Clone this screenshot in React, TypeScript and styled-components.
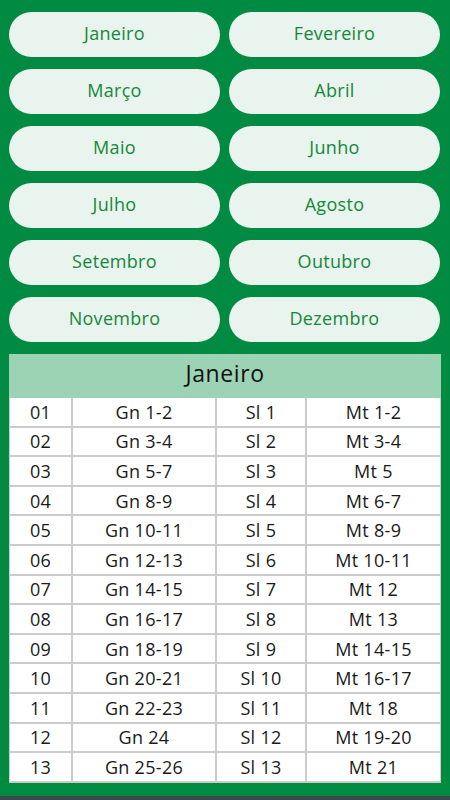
import React from 'react';
import styled, { createGlobalStyle } from 'styled-components';

const GlobalStyle = createGlobalStyle`
    html, body {
        margin: 0;
        padding: 0;
        background: #3a4950;
        font-family: "Open Sans", "Noto Sans", sans-serif;
    }
`

const Page = styled.div`
    width: 450px;
    box-sizing: border-box;
    background: #008a42;
    padding: 12px 9px 13px 9px;
`

const MonthGrid = styled.div`
    display: grid;
    grid-template-columns: 211px 211px;
    column-gap: 9px;
    row-gap: 12px;
`

const MonthBtn = styled.button`
    height: 45px;
    border: none;
    border-radius: 23px;
    background: #e8f4ed;
    color: #16883a;
    font-family: "Open Sans", "Noto Sans", sans-serif;
    font-size: 18px;
    letter-spacing: 0.3px;
    cursor: pointer;
    padding: 0 0 3px 0;
`

const Table = styled.div`
    margin-top: 12px;
    width: 432px;
`

const TableTitle = styled.div`
    height: 44px;
    padding-bottom: 6px;
    box-sizing: border-box;
    background: #9dd3b5;
    display: flex;
    align-items: center;
    justify-content: center;
    font-size: 23px;
    color: #111;
    letter-spacing: 0.6px;
`

const Rows = styled.div`
    display: grid;
    grid-template-columns: 61px 142px 88px 133px;
    grid-auto-rows: 27.6px;
    column-gap: 2px;
    row-gap: 2px;
    padding: 0 1px 2px 1px;
    background: #cccccc;
`

const Cell = styled.div`
    background: #fff;
    display: flex;
    align-items: center;
    justify-content: center;
    font-size: 18px;
    color: #1a1a1a;
    letter-spacing: 0.3px;
`

const months = [
    'Janeiro', 'Fevereiro', 'Março', 'Abril', 'Maio', 'Junho',
    'Julho', 'Agosto', 'Setembro', 'Outubro', 'Novembro', 'Dezembro',
]

const readings: [string, string, string, string][] = [
    ['01', 'Gn 1-2', 'Sl 1', 'Mt 1-2'],
    ['02', 'Gn 3-4', 'Sl 2', 'Mt 3-4'],
    ['03', 'Gn 5-7', 'Sl 3', 'Mt 5'],
    ['04', 'Gn 8-9', 'Sl 4', 'Mt 6-7'],
    ['05', 'Gn 10-11', 'Sl 5', 'Mt 8-9'],
    ['06', 'Gn 12-13', 'Sl 6', 'Mt 10-11'],
    ['07', 'Gn 14-15', 'Sl 7', 'Mt 12'],
    ['08', 'Gn 16-17', 'Sl 8', 'Mt 13'],
    ['09', 'Gn 18-19', 'Sl 9', 'Mt 14-15'],
    ['10', 'Gn 20-21', 'Sl 10', 'Mt 16-17'],
    ['11', 'Gn 22-23', 'Sl 11', 'Mt 18'],
    ['12', 'Gn 24', 'Sl 12', 'Mt 19-20'],
    ['13', 'Gn 25-26', 'Sl 13', 'Mt 21'],
]

const App = (): JSX.Element => {
    return (
        <>
            <GlobalStyle />
            <Page>
                <MonthGrid>
                    {months.map((m) => (
                        <MonthBtn key={m}>{m}</MonthBtn>
                    ))}
                </MonthGrid>
                <Table>
                    <TableTitle>Janeiro</TableTitle>
                    <Rows>
                        {readings.map((r) =>
                            r.map((c, i) => <Cell key={r[0] + '-' + i}>{c}</Cell>)
                        )}
                    </Rows>
                </Table>
            </Page>
        </>
    )
}

export default App
